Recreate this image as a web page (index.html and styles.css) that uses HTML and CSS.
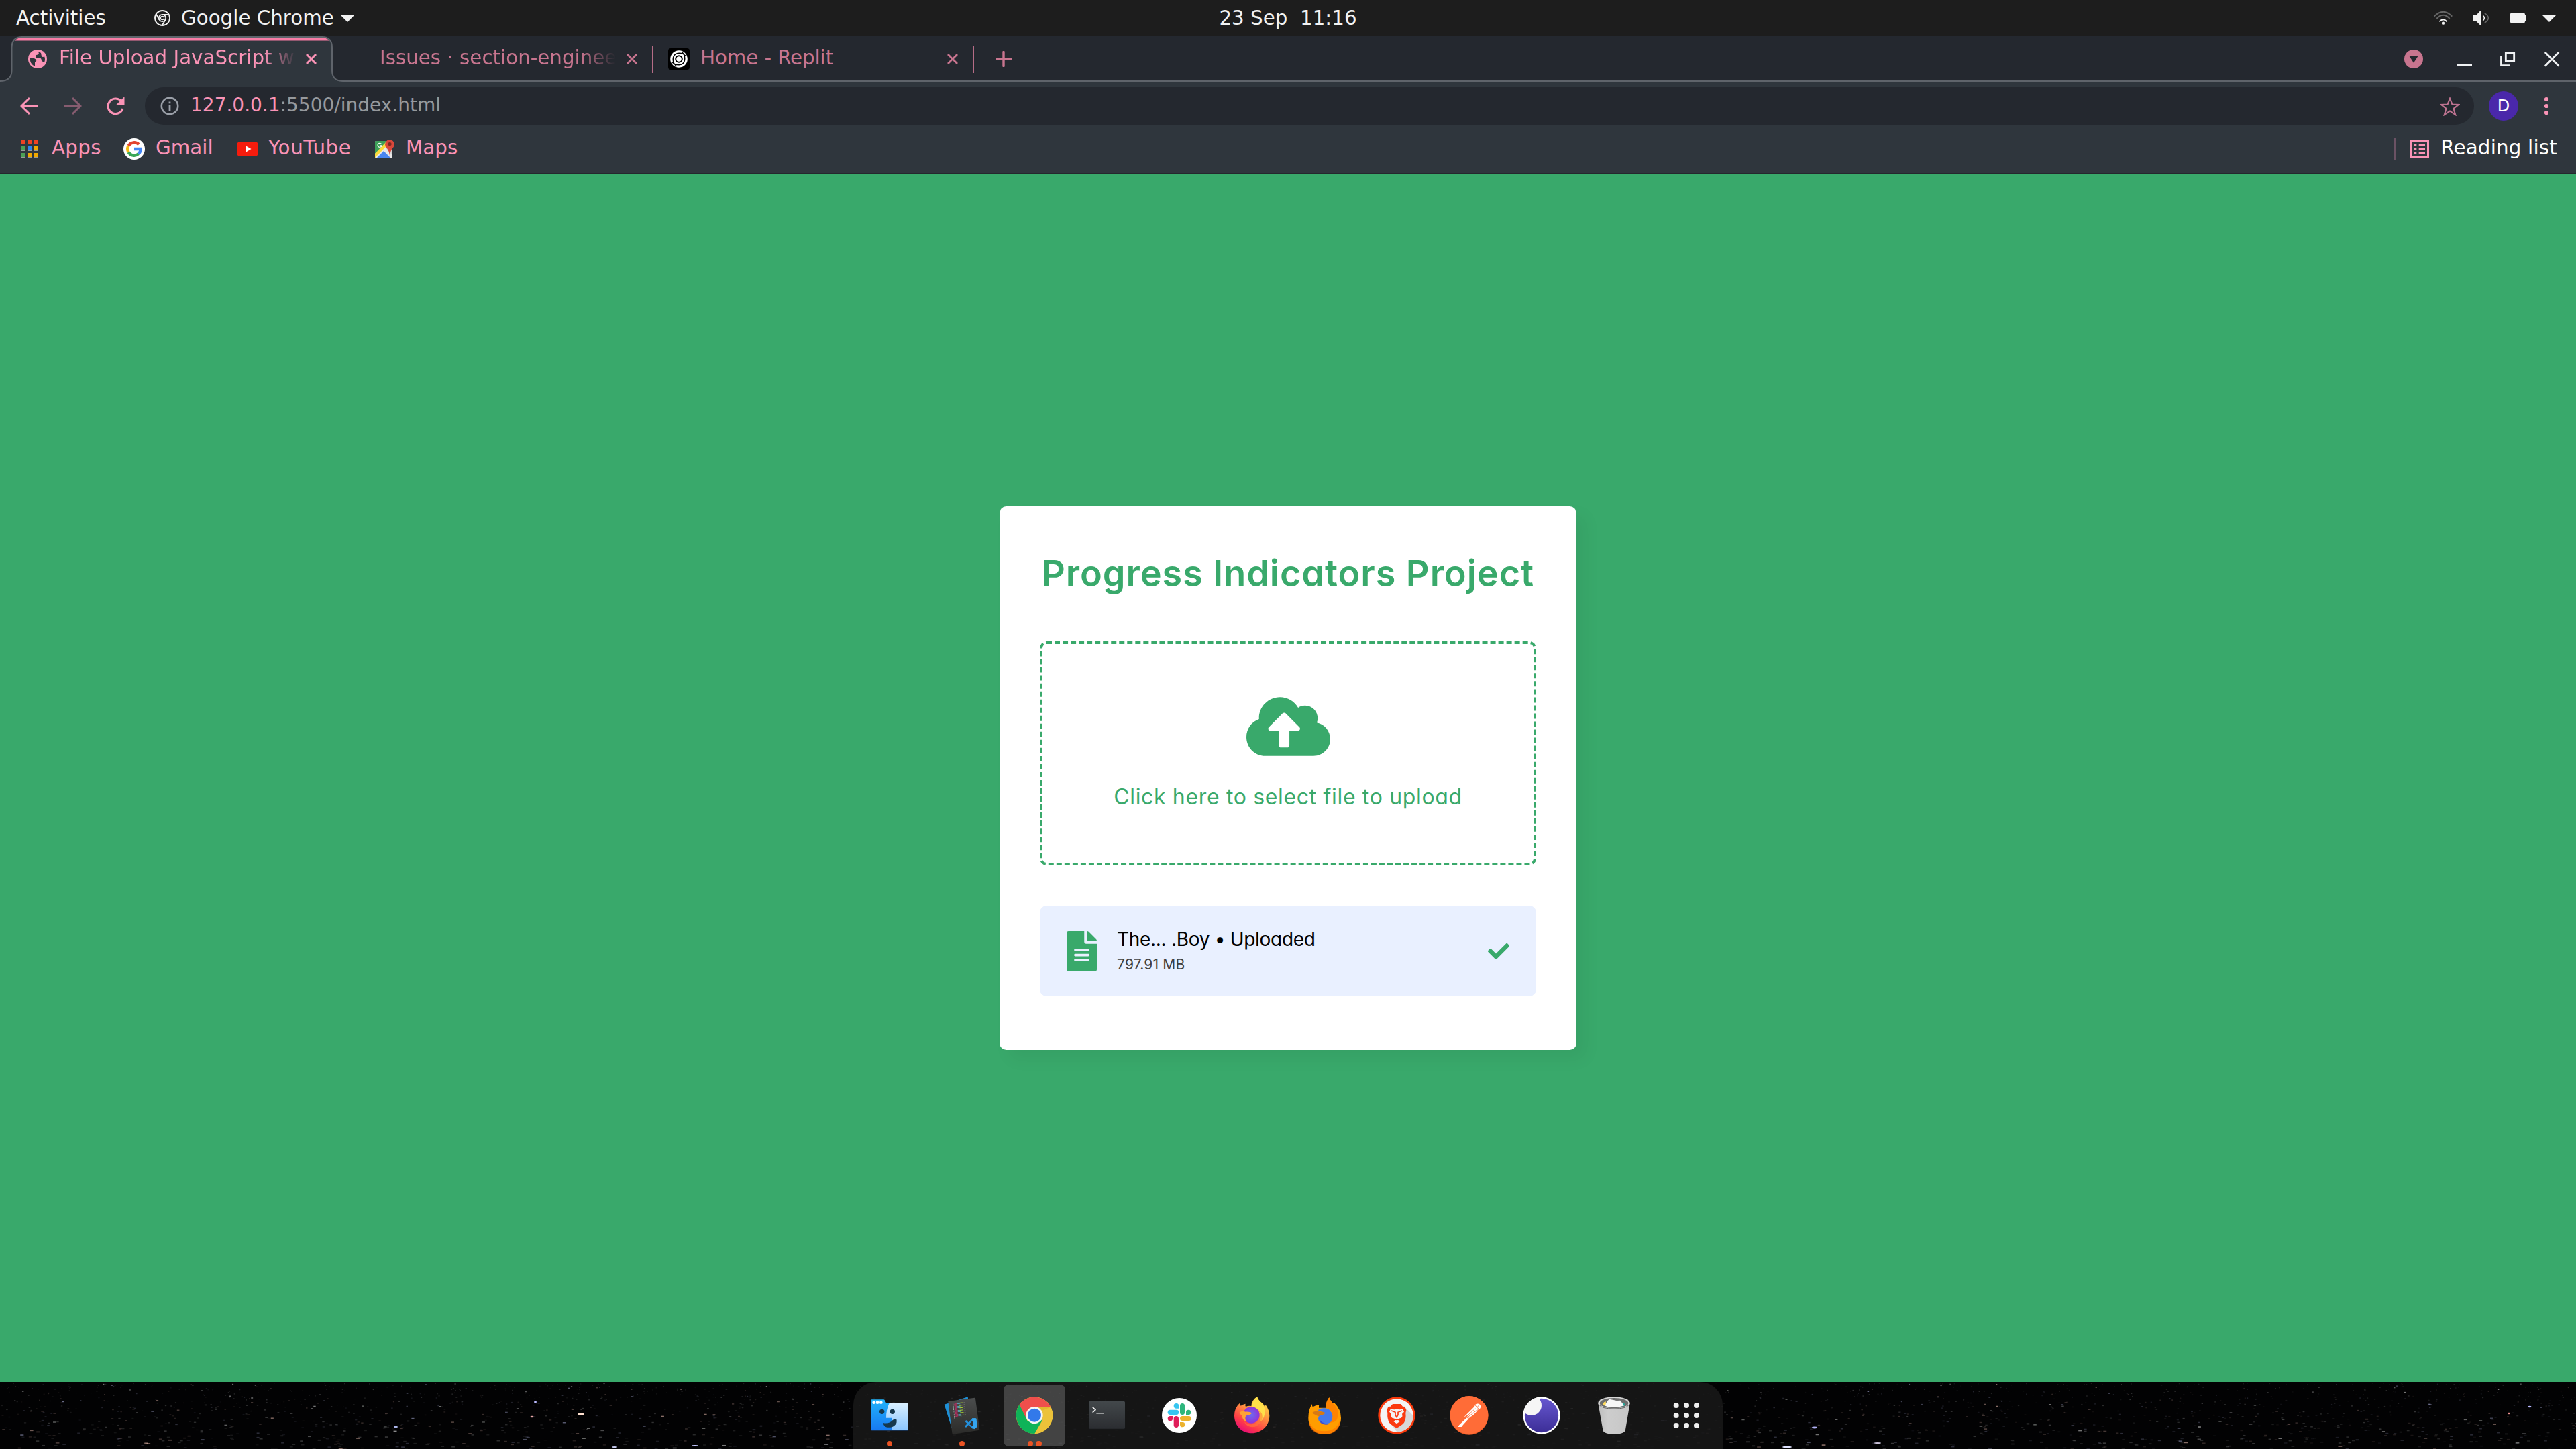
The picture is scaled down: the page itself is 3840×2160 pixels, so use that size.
FILE: index.html
```html
<!DOCTYPE html>
<html lang="en">
<head>
<meta charset="utf-8">
<title>File Upload JavaScript with Progress</title>
<link rel="stylesheet" href="styles.css">
</head>
<body>
<header class="topbar">
  <div class="topbar-left">
    <span class="activities">Activities</span>
    <svg class="app-icon" width="26" height="26" viewBox="0 0 26 26" fill="none" stroke="#f2f2f2" stroke-width="1.8"><circle cx="13" cy="13" r="11"/><circle cx="13" cy="13" r="5.2"/><circle cx="13" cy="13" r="2.6" stroke-width="1.2"/><path d="M13 7.8h9.6M8.5 15.6 3.8 7.2M17.5 15.6 12.7 24"/></svg>
    <span>Google Chrome</span>
    <svg class="caret" width="20" height="10" viewBox="0 0 20 10"><path d="M0 0h20L10 10z" fill="#f2f2f2"/></svg>
  </div>
  <div class="clock">23 Sep  11:16</div>
  <div class="topbar-right">
    <svg width="28" height="22" viewBox="684 48 84 66" fill="none" stroke-width="6"><path d="M686 74q40-42 80 0" stroke="#666"/><path d="M697 84q29-31 58 0" stroke="#666"/><path d="M709 97q17-19 34 0" stroke="#f2f2f2"/><circle cx="726" cy="104" r="6.5" fill="#f2f2f2"/></svg>
    <svg class="volume" width="26" height="22" viewBox="855 48 78 66" fill="none"><path d="M858 68h16l18-19h5v64h-5l-18-18h-16z" fill="#f2f2f2"/><path d="M904 70q12 11 0 23" stroke="#f2f2f2" stroke-width="5"/><path d="M911 59q34 22 0 44" stroke="#666" stroke-width="5"/></svg>
    <svg class="battery" width="24" height="14" viewBox="0 0 24 14"><path d="M1 0h20q1 0 1 2l2 1v8l-2 1q0 2-1 2H1q-1 0-1-1V1q0-1 1-1z" fill="#f2f2f2"/></svg>
    <svg class="power-caret" width="20" height="10" viewBox="0 0 20 10"><path d="M0 0h20L10 10z" fill="#f2f2f2"/></svg>
  </div>
</header>

<nav class="tabstrip">
  <div class="tab tab-active">
    <svg class="tab-shape" width="512" height="68" viewBox="0 0 512 68"><path d="M0 68V67Q17.500 67 17.500 51V17Q17.500 1 33 1H480Q495 1 495 17V51Q495 67 511 67V68z" fill="#2f363d"/><path d="M22 6.500Q26 2 33 2H480Q487 2 491 6.500z" fill="#f97da6"/><path d="M0 67Q17.500 67 17.500 51V17Q17.500 1 33 1H480Q495 1 495 17V51Q495 67 511 67" fill="none" stroke="#5f646b" stroke-width="2"/></svg>
    <svg class="favicon" width="28" height="28" viewBox="0 0 28 28"><circle cx="14" cy="14" r="14" fill="#fa93b6"/><path d="M3 13q6-1 9 2 1 2-2 4v6q-8-4-7-12zM14 3l2 2q-1 3-4 3l-1 4h6q3 1 3 5l4 2q2-5 0-9-2 2-4 0l-1-5q-2-2-5-2z" fill="#2f363d"/></svg>
    <span class="tab-title">File Upload JavaScript w</span>
    <svg class="tab-close" width="16" height="16" viewBox="0 0 16 16"><path d="m1 1 14 14M15 1 1 15" stroke="#fa93b6" stroke-width="3"/></svg>
  </div>
  <div class="tab tab-issues">
    <span class="tab-title">Issues · section-enginee</span>
    <svg class="tab-close" width="16" height="16" viewBox="0 0 16 16"><path d="m1 1 14 14M15 1 1 15" stroke="#c8758f" stroke-width="2.800"/></svg>
  </div>
  <div class="tab tab-replit">
    <svg class="favicon" width="32" height="32" viewBox="0 0 32 32"><rect width="32" height="32" rx="4"/><circle cx="16" cy="16" r="12.800" fill="#fff"/><g fill="none" stroke="#000" stroke-width="1.400"><circle cx="16" cy="16" r="4.800" stroke-width="2"/><path d="M18 7.500Q9 6.500 7.500 14t5 13M14 24.500q9 1 10.500-6.500T20 5M7.500 18Q7 9 14 7.500T27 12M24.500 14q.5 9-6.500 10.500T5 20"/></g></svg>
    <span class="tab-title">Home - Replit</span>
    <svg class="tab-close" width="16" height="16" viewBox="0 0 16 16"><path d="m1 1 14 14M15 1 1 15" stroke="#c8758f" stroke-width="2.800"/></svg>
  </div>
  <svg class="new-tab" width="24" height="24" viewBox="0 0 24 24"><path d="M12 1.500v21M1.500 12h21" stroke="#c8758f" stroke-width="3.400" stroke-linecap="round"/></svg>
  <svg class="window-controls" width="240" height="32" viewBox="552 216 720 96"><circle cx="594" cy="264" r="42" fill="#c8758f"/><path d="M575 252h38l-19 29z" fill="#24282f"/><path d="M789 288h66v9h-66z" fill="#f0f2f4"/><path d="M1006 235.500h37v36h-37z M985.500 252v41H1026" fill="none" stroke="#f0f2f4" stroke-width="8.500"/><path d="m1184 236 57 57m0-57-57 57" stroke="#f0f2f4" stroke-width="8.500" stroke-linecap="round"/></svg>
</nav>

<div class="toolbar">
  <div class="nav-buttons">
    <svg width="28" height="28" viewBox="0 0 28 28" fill="none" stroke="#fa93b6" stroke-width="3"><path d="M27 14H3M14 2 2 14l12 12"/></svg>
    <svg width="28" height="28" viewBox="0 0 28 28" fill="none" stroke="#865c70" stroke-width="3"><path d="M1 14h24M14 2l12 12-12 12"/></svg>
    <svg width="28" height="28" viewBox="0 0 28 28"><path d="M22.500 6.500A11.300 11.300 0 1 0 25 18" fill="none" stroke="#fa93b6" stroke-width="3.200"/><path d="M27.500 0v12h-12z" fill="#fa93b6"/></svg>
  </div>
  <div class="omnibox">
    <svg width="28" height="28" viewBox="0 0 28 28"><circle cx="14" cy="14" r="12.200" fill="none" stroke="#9a9fa8" stroke-width="2.600"/><path d="M12.600 12.500h2.800V21h-2.800zM12.600 7.500h2.800v2.800h-2.800z" fill="#9a9fa8"/></svg>
    <span class="url"><b>127.0.0.1</b>:5500/index.html</span>
    <svg class="star" width="30" height="30" viewBox="711 429 90 90"><path d="m756 440 10.500 27 28 1-22 18 8 27-24.500-16-24.500 16 8-27-22-18 28-1z" fill="none" stroke="#bd7390" stroke-width="6.500"/></svg>
  </div>
  <div class="avatar">D</div>
  <svg class="kebab" width="8" height="28" viewBox="0 0 8 28" fill="#fa93b6"><circle cx="4" cy="4" r="3.100"/><circle cx="4" cy="14" r="3.100"/><circle cx="4" cy="24" r="3.100"/></svg>
</div>

<div class="bookmarks">
  <svg class="bm-apps-icon" width="28" height="28" viewBox="0 0 28 28"><path d="M1 6h6v1H1zm10 0h6v1h-6zm10 0h6v1h-6zM1 16h6v1H1zm10 0h6v1h-6zm10 0h6v1h-6zM1 26h6v1H1zm10 0h6v1h-6zm10 0h6v1h-6z" fill="#999"/><path d="M1 0h6v6H1zm10 0h6v6h-6zm10 0h6v6h-6z" fill="#ee4223"/><path d="M1 10h6v6H1zm0 10h6v6H1z" fill="#4c9f55"/><path d="M11 10h6v6h-6z" fill="#2e86f0"/><path d="M21 10h6v6h-6zM11 20h6v6h-6zm10 0h6v6h-6z" fill="#f0a800"/></svg>
  <span class="bm bm-apps">Apps</span>
  <svg class="bm-gmail-icon" width="32" height="32" viewBox="0 0 32 32"><circle cx="16" cy="16" r="16" fill="#fff"/><g fill="none" stroke-width="4.400"><path d="M23 9.300A9.700 9.700 0 0 0 7.600 11.200" stroke="#e2432f"/><path d="M7.600 11.200a9.700 9.700 0 0 0 0 9.600" stroke="#f5b912"/><path d="M7.600 20.800a9.700 9.700 0 0 0 14.900 2.400" stroke="#3aa757"/><path d="M22.500 23.200A9.700 9.700 0 0 0 25.700 16H16" stroke="#4285f4"/></g></svg>
  <span class="bm bm-gmail">Gmail</span>
  <svg class="bm-yt-icon" width="32" height="24" viewBox="0 0 32 24"><rect y="1" width="32" height="22" rx="5" fill="#f61c0d"/><path d="m13 7 8.500 5-8.500 5z" fill="#fff"/></svg>
  <span class="bm bm-youtube">YouTube</span>
  <svg class="bm-maps-icon" width="30" height="30" viewBox="0 0 30 30"><rect y="3" width="26" height="26" rx="2" fill="#e8e8e8"/><path d="M0 22V5q0-2 2-2h17v4z" fill="#3d9f58"/><path d="M2 29 13 18l11 11z" fill="#4a86f0"/><path d="M0 22v6L20 8l-3-4z" fill="#fddb3a"/><path d="M16 14l10 10V11z" fill="#d3d3d3"/><path d="M22 25q-1-8-5-12a7 7 0 1 1 10 0q-4 4-5 12z" fill="#d9483b"/><circle cx="22" cy="7.500" r="2.600" fill="#7b2a22"/><path d="M9.500 7.500A3 3 0 1 0 10 10H7" fill="none" stroke="#fff" stroke-width="1.300"/></svg>
  <span class="bm bm-maps">Maps</span>
  <div class="reading">
    <svg width="28" height="28" viewBox="576 624 84 84" fill="#fa93b6"><path d="M576 624h84v84h-84zm9 9v66h66v-66z" fill-rule="evenodd"/><path d="M594 642h10v9h-10zm20 0h28v9h-28zm-20 19h10v9h-10zm20 0h28v9h-28zm-20 19h10v9h-10zm20 0h28v9h-28z"/></svg>
    <span class="bm">Reading list</span>
  </div>
</div>

<main class="page">
  <section class="card">
    <h1 class="card-title">Progress Indicators Project</h1>
    <form class="dropzone">
      <svg width="125" height="100" viewBox="0 0 640 512"><path fill="#39a96b" d="M537.600 226.600c4.100-10.700 6.400-22.400 6.400-34.600 0-53-43-96-96-96-19.700 0-38.100 6-53.300 16.200C367 64.200 315.300 32 256 32c-88.400 0-160 71.600-160 160 0 2.700.1 5.400.2 8.100C40.200 219.800 0 273.200 0 336c0 79.500 64.500 144 144 144h368c70.700 0 128-57.300 128-128 0-61.900-44-113.600-102.400-125.400zM393.400 288H328v112c0 8.800-7.200 16-16 16h-48c-8.800 0-16-7.200-16-16V288h-65.400c-14.300 0-21.400-17.200-11.300-27.400l105.400-105.400c6.200-6.200 16.400-6.200 22.600 0l105.400 105.400c10.100 10.100 2.900 27.400-11.300 27.400z"/></svg>
      <p class="dropzone-text">Click here to select file to upload</p>
    </form>
    <div class="file-row">
      <svg width="45" height="60" viewBox="0 0 384 512"><path fill="#39a96b" d="M224 136V0H24C10.700 0 0 10.700 0 24v464c0 13.300 10.700 24 24 24h336c13.300 0 24-10.700 24-24V160H248c-13.200 0-24-10.800-24-24zm64 236c0 6.600-5.400 12-12 12H108c-6.600 0-12-5.400-12-12v-8c0-6.600 5.400-12 12-12h168c6.600 0 12 5.400 12 12v8zm0-64c0 6.600-5.400 12-12 12H108c-6.600 0-12-5.400-12-12v-8c0-6.600 5.400-12 12-12h168c6.600 0 12 5.400 12 12v8zm0-72v8c0 6.600-5.400 12-12 12H108c-6.600 0-12-5.400-12-12v-8c0-6.600 5.400-12 12-12h168c6.600 0 12 5.400 12 12zm96-114.100v6.100H256V0h6.100c6.400 0 12.500 2.500 17 7l97.900 98c4.500 4.500 7 10.600 7 16.900z"/></svg>
      <div class="file-details">
        <span class="file-name">The... .Boy • Uploaded</span>
        <span class="file-size">797.91 MB</span>
      </div>
      <svg class="check" width="32" height="32" viewBox="0 0 512 512"><path fill="#39a96b" d="M173.898 439.404l-166.400-166.400c-9.997-9.997-9.997-26.206 0-36.204l36.203-36.204c9.997-9.998 26.207-9.998 36.204 0L192 312.690 432.095 72.596c9.997-9.997 26.207-9.997 36.204 0l36.203 36.204c9.997 9.997 9.997 26.206 0 36.204l-294.400 294.401c-9.998 9.997-26.207 9.997-36.204-.001z"/></svg>
    </div>
  </section>
</main>

<footer class="desktop">
  <canvas class="stars" width="3840" height="100"></canvas>
  <div class="dock">
    <div class="slot">
      <svg width="56" height="56" viewBox="84 96 168 168"><defs><linearGradient id="fl" x2="0" y2="1"><stop stop-color="#22b4fb"/><stop offset="1" stop-color="#1779f2"/></linearGradient><linearGradient id="fr" x2="0" y2="1"><stop stop-color="#d9f0ff"/><stop offset="1" stop-color="#8cc6ff"/></linearGradient></defs><path d="M85 113q0-4 4-4h52q4 0 6 4l6 11h94q5 0 5 5v114q0 4-4 4H89q-4 0-4-4z" fill="url(#fl)"/><path d="M167 125h80q4 0 4 4v112q0 4-4 4h-67q-3-12-3-25v-29h-24q0-38 14-66z" fill="url(#fr)"/><g fill="#fff"><circle cx="98" cy="122" r="7"/><circle cx="114" cy="122" r="7"/><circle cx="130" cy="122" r="7"/></g><g fill="#16384d"><circle cx="134" cy="163" r="11"/><circle cx="181" cy="163" r="11"/><path d="M140 213q25 6 42-12 6-6 17-3 5 15-8 26-14 12-34 9-17-4-17-20z"/></g></svg>
      <span class="dots"><i></i></span>
    </div>
    <div class="slot">
      <svg width="56" height="56" viewBox="408 96 168 168"><defs><linearGradient id="vs" x2="0" y2="1"><stop stop-color="#4b4d4d"/><stop offset="1" stop-color="#2b2b29"/></linearGradient></defs><path d="m413 131 105-34 14 100-86 40z" fill="#1e8fd5"/><path d="m430 117 119-16q3 0 3 3l19 141-118 18q-4 0-5-4z" fill="url(#vs)"/><g fill="none" stroke-width="3" transform="rotate(-6 480 155)"><path d="M455 126v68" stroke="#ddd" stroke-dasharray="2 3"/><path d="M466 126v60" stroke="#e5266f" stroke-width="12" stroke-dasharray="3 3"/><path d="M480 126v64" stroke="#58b9d0" stroke-width="14" stroke-dasharray="2 4"/><path d="M490 123v66" stroke="#a4cf35" stroke-width="16" stroke-dasharray="3 8"/><path d="M503 125v62" stroke="#ddd" stroke-width="8" stroke-dasharray="2 7"/></g><path d="m508 204 34 32M507 231l35-36" stroke="#2390dc" stroke-width="8"/><path d="m538 193 14-1q5 0 5 5l3 34-13 10-9-5z" fill="#35a5ef"/><path d="m539 204-14 15 17 10z" fill="#333"/></svg>
      <span class="dots"><i></i></span>
    </div>
    <div class="slot slot-active">
      <svg width="56" height="56" viewBox="732 96 168 168"><circle cx="816" cy="179" r="82" fill="#fdd835"/><path d="M898 179a82 82 0 0 1-82 82l36-64 0-54h37q9 17 9 36z" fill="#ecc23a"/><path d="M748 133a82 82 0 0 1 141 10h-73l-38 56z" fill="#ef4f4c"/><path d="M749 132a82 82 0 0 0 68 129l36-62-68 6z" fill="#0fb358"/><path d="M817 143h72l-40 16z" fill="#e3b72f"/><circle cx="816" cy="179" r="38" fill="#f5f5f5"/><circle cx="816" cy="179" r="30" fill="#3279ea"/></svg>
      <span class="dots"><i></i><i></i></span>
    </div>
    <div class="slot">
      <svg width="56" height="56" viewBox="1056 96 168 168"><defs><linearGradient id="tm" x2="0" y2="1"><stop stop-color="#43484b"/><stop offset="1" stop-color="#2b2d31"/></linearGradient></defs><rect x="1058" y="117" width="164" height="125" rx="5" fill="#17181a"/><rect x="1059" y="117" width="162" height="122" rx="5" fill="url(#tm)"/><path d="m1076 143 13 12-13 12M1093 170h32" fill="none" stroke="#f5f5f5" stroke-width="4.500"/></svg>
    </div>
    <div class="slot">
      <svg width="56" height="56" viewBox="90 96 168 168"><circle cx="174" cy="180" r="78" fill="#fff"/><g fill="#36c5f0"><path d="M160 149a11.500 11.500 0 1 1 12-11.500V149z"/><rect x="122" y="155" width="50" height="22" rx="11"/></g><g fill="#2eb67d"><rect x="177" y="126" width="21" height="51" rx="10.500"/><path d="M204 167a11 11 0 1 1 11 10h-11z"/></g><g fill="#ecb22e"><rect x="177" y="183" width="50" height="21" rx="10.500"/><path d="M177 210h10a11 11 0 1 1-10 11z"/></g><g fill="#e01e5a"><path d="M144 183v10a11 11 0 1 1-11-10z"/><rect x="149" y="183" width="22" height="51" rx="11"/></g></svg>
    </div>
    <div class="slot">
      <svg width="56" height="56" viewBox="414 96 168 168"><defs><linearGradient id="ff" x1=".8" y1="0" x2=".25" y2="1"><stop stop-color="#fff04a"/><stop offset=".4" stop-color="#ff9640"/><stop offset=".75" stop-color="#ff3b47"/><stop offset="1" stop-color="#e2067d"/></linearGradient><radialGradient id="fg"><stop stop-color="#6b6bf0"/><stop offset="1" stop-color="#9333d6"/></radialGradient></defs><path d="M447 122q-3 10 2 15 6-6 21-9-3 8 1 13 12-5 25-3 0-25 26-42 6 17 21 28 11 8 13 18l4-9q16 22 17 48c0 46-36 78-79 78s-78-31-78-78q0-36 27-59z" fill="url(#ff)"/><path d="M498 141q2-26 24-44 4 16 20 28 20 20 13 51-4 22-20 32 2-28-5-45-10-18-32-22z" fill="#ffe04a"/><circle cx="496" cy="178" r="37" fill="url(#fg)"/><path d="M443 166q12-9 28-2 18-1 27 5-3 10-25 12-8 10 0 26-18-8-18-25-10-6-12-16z" fill="#ffa236"/><path d="M464 206q10 14 34 14 30-3 36-33 2-20-8-34 28 18 16 50-18 32-48 28-22-4-30-25z" fill="#ff7a37" opacity=".6"/></svg>
    </div>
    <div class="slot">
      <svg width="56" height="56" viewBox="738 96 168 168"><path d="M768 129q-1 9 3 13 9-6 28-10-2 8-1 14h33q-2-29 13-46 7 18 18 26l4-4q31 30 31 69c0 41-31 73-73 73s-73-31-73-73q0-39 17-62z" fill="#ff9d00"/><path d="M831 146q-3-30 13-46 7 18 17 26 38 35 14 79-18 10-33 8 26-17 14-40 3-15-25-27z" fill="#ff8300"/><path d="M793 157q23-18 50-4l14 17q8 28-12 44-27 11-46-8-8-14 0-24l27-12z" fill="#4479ec"/><path d="M798 190q8 29 47 28-23 8-39-5z" fill="#414dc9"/><path d="M770 166q13-8 29-3 18-1 27 5-3 9-23 12-4 7-11 2l-10-5q-11-3-12-11z" fill="#d87913"/><path d="M752 195q12 55 70 55 57 0 73-55-1 69-73 69-70 0-70-69z" fill="#ff6f00" opacity=".6"/></svg>
    </div>
    <div class="slot">
      <svg width="56" height="56" viewBox="1062 96 168 168"><circle cx="1146" cy="180" r="83" fill="#fa3a0c"/><circle cx="1146" cy="180" r="74" fill="#f4f4f4"/><path d="m1184 145 36 36a74 74 0 0 1-72 73l-22-28 40-10z" fill="#d7d7d7"/><path d="M1128 129h36l9 11 10 1 6 16-3 12q3 27-7 43-8 11-33 24-25-13-33-24-10-16-8-43l-3-12 6-16 10-1z" fill="#fb3a10"/><path d="M1118 152l18 2 10-4 10 4 18-2 5 12-9 9q4 13-4 18l-18 6 12 10-14 10-14-10 12-10-18-6q-8-5-4-18l-9-9z" fill="#f4f4f4"/><path d="M1122 159l18 7v12l6 10 6-10v-12l18-7M1126 196l20 3 20-3" fill="none" stroke="#fb3a10" stroke-width="5"/></svg>
    </div>
    <div class="slot">
      <svg width="58" height="58" viewBox="93 93 174 174"><circle cx="180" cy="180" r="86" fill="#e85a25"/><circle cx="180" cy="178" r="85" fill="#ff6c37"/><circle cx="218" cy="141" r="13.500" fill="#fff"/><path d="M208 135q7 13 14 14M218 141l8-9" stroke="#ff6c37" stroke-width="2.500" fill="none"/><path d="m207 137 11 20q-16 22-33 30l-32 35-7 9h-17l8-10 34-32 3-11-18 10z" fill="#fff"/><path d="m208 149-40 36M213 158l-38 29M170 190l10 3" stroke="#ff6c37" stroke-width="2.500"/></svg>
    </div>
    <div class="slot">
      <svg width="56" height="56" viewBox="420 96 168 168"><defs><linearGradient id="ins" x2="0" y2="1"><stop stop-color="#6657cf"/><stop offset="1" stop-color="#3c2e97"/></linearGradient><clipPath id="insc"><circle cx="504" cy="180" r="82"/></clipPath></defs><circle cx="504" cy="180" r="83" fill="#fff"/><circle cx="504" cy="180" r="75.500" fill="url(#ins)"/><circle cx="459" cy="135" r="45" fill="#f6f6f6" clip-path="url(#insc)"/></svg>
    </div>
    <div class="slot">
      <svg width="56" height="56" viewBox="744 96 168 168"><defs><linearGradient id="tr"><stop stop-color="#bdbdbd"/><stop offset=".3" stop-color="#cdcdcd"/><stop offset="1" stop-color="#c6c6c6"/></linearGradient></defs><path d="M757 126h142l-20 118q-2 19-51 19t-50-19z" fill="url(#tr)"/><ellipse cx="828" cy="124" rx="71" ry="27" fill="#d6d6d6"/><ellipse cx="828" cy="125" rx="64" ry="23" fill="#6d6d6d"/><path d="M778 134q-3-10 12-18l6 22z" fill="#ffdb5c"/><path d="m866 122 12 7-3 7-10 4z" fill="#22a69a"/><path d="M789 137q2-17 18-30l33 7 16-1 17 23q-20 8-45 8t-39-7z" fill="#f7f7f7"/><path d="M762 133q10 17 66 17t66-17" fill="none" stroke="#5e5e5e" stroke-width="3"/></svg>
    </div>
    <div class="slot">
      <svg width="56" height="56" viewBox="1068 96 168 168" fill="#f0f0f0"><circle cx="1106" cy="135" r="12"/><circle cx="1152" cy="135" r="12"/><circle cx="1197" cy="135" r="12"/><circle cx="1106" cy="180" r="12"/><circle cx="1152" cy="180" r="12"/><circle cx="1197" cy="180" r="12"/><circle cx="1106" cy="225" r="12"/><circle cx="1152" cy="225" r="12"/><circle cx="1197" cy="225" r="12"/></svg>
    </div>
  </div>
</footer>
<script src="script.js"></script>
</body>
</html>
```
FILE: styles.css
```css
* { box-sizing: border-box; }
body {
  margin: 0;
  width: 3840px;
  height: 2160px;
  display: flex;
  flex-direction: column;
  overflow: hidden;
  background: #020203;
  font-family: "DejaVu Sans", sans-serif;
  font-size: 29.33px;
  line-height: 36px;
}
svg { display: block; flex: none; }

/* Desktop panel */
.topbar {
  height: 54px;
  flex: none;
  display: grid;
  grid-template-columns: 1fr auto 1fr;
  align-items: center;
  background: #1d1d1d;
  color: #f2f2f2;
}
.topbar-left { display: flex; align-items: center; padding-left: 24px; }
.activities { width: 205px; }
.app-icon { margin-right: 15px; }
.caret { margin: 2px 0 0 10px; }
.clock { white-space: pre; }
.topbar-right { display: flex; align-items: center; justify-content: flex-end; padding-right: 30px; }
.volume { margin-left: 29px; }
.battery { margin-left: 31px; }
.power-caret { margin: 2px 0 0 24px; }

/* Browser tabs */
.tabstrip {
  height: 68px;
  flex: none;
  display: flex;
  align-items: center;
  background: #24282f;
  border-bottom: 2px solid #5f646b;
}
.tab { display: flex; align-items: center; height: 66px; position: relative; }
.tab-title {
  flex: 1;
  white-space: nowrap;
  padding-bottom: 2px;
  color: #c8758f;
}
.tab-close { position: relative; top: 1px; }
.tab > .favicon { position: relative; top: 1px; margin-right: 16px; }
.tab-active { width: 495px; padding: 0 23px 0 42px; }
.tab-active > .favicon { margin-right: 18px; }
.tab-active .tab-title {
  position: relative;
  color: #fa93b6;
  margin-right: 14px;
  -webkit-mask-image: linear-gradient(90deg, #000 305px, transparent 354px);
  mask-image: linear-gradient(90deg, #000 305px, transparent 354px);
}
.tab-shape { position: absolute; left: 0; top: 0; }
.tab-issues { width: 479px; padding: 0 24px 0 71px; }
.tab-issues .tab-title {
  -webkit-mask-image: linear-gradient(90deg, #000 300px, transparent 352px);
  mask-image: linear-gradient(90deg, #000 300px, transparent 352px);
}
.tab-replit { width: 478px; padding: 0 24px 0 22px; }
.tab-replit .tab-title { letter-spacing: -0.1px; }
.tab-issues::after, .tab-replit::after {
  content: "";
  position: absolute;
  right: 0;
  top: 15px;
  width: 2px;
  height: 40px;
  background: #b56c86;
}
.new-tab { margin: 2px 0 0 32px; }
.window-controls { margin: 2px 16px 0 auto; }

/* Address bar */
.toolbar {
  height: 72px;
  flex: none;
  display: flex;
  align-items: center;
  background: #2f363d;
  padding: 0 40px 0 30px;
}
.nav-buttons { display: flex; gap: 36px; width: 186px; }
.omnibox {
  height: 56px;
  width: 3472px;
  display: flex;
  align-items: center;
  padding: 0 21px 0 23px;
  border-radius: 28px;
  background: #24282f;
}
.url { margin-left: 17px; padding-bottom: 3px; font-size: 28px; color: #96999d; }
.url b { font-weight: 400; color: #fa93b6; }
.star { margin-left: auto; }
.avatar {
  width: 44px;
  height: 44px;
  margin-left: 22px;
  border-radius: 50%;
  background: #4a28aa;
  color: #fff;
  text-align: center;
  font-size: 24px;
  line-height: 44px;
}
.kebab { margin-left: 38px; }

/* Bookmarks bar */
.bookmarks {
  height: 66px;
  flex: none;
  display: flex;
  align-items: center;
  padding: 0 28px 9px 30px;
  background: #2f363d;
  border-bottom: 2px solid #24282d;
}
.bm { color: #fa93b6; padding-bottom: 3px; }
.bm-apps { width: 107px; margin-left: 19px; letter-spacing: 0.3px; }
.bm-gmail { width: 121px; margin-left: 16px; }
.bm-youtube { width: 160px; margin-left: 15px; letter-spacing: 0.6px; }
.bm-maps { margin-left: 16px; }
.bm-maps-icon { margin-left: -1px; }
.reading {
  display: flex;
  align-items: center;
  gap: 17px;
  height: 32px;
  margin-left: auto;
  padding-left: 22px;
  border-left: 2px solid #6b5264;
}
.reading .bm { color: #fff; letter-spacing: 0.2px; }

/* Upload page */
.page { height: 1800px; flex: none; padding: 495px 1490px 0; background: #39a96b; }
.card {
  width: 860px;
  height: 810px;
  padding: 60px;
  border-radius: 10px;
  background: #fff;
  box-shadow: 14px 14px 24px rgba(0, 0, 0, 0.05);
  font-family: Inter, "Open Sans", sans-serif;
  font-feature-settings: "cv11";
}
.card-title {
  margin: 0 0 60px;
  height: 81px;
  font-size: 54px;
  font-weight: 600;
  line-height: 80px;
  letter-spacing: 0.95px;
  text-align: center;
  white-space: nowrap;
  color: #39a96b;
}
.dropzone {
  height: 334px;
  display: flex;
  flex-direction: column;
  align-items: center;
  padding-top: 73px;
  border: 4px dashed #39a96b;
  border-radius: 10px;
}
.dropzone-text {
  margin: 31px 0 0;
  font-size: 32px;
  line-height: 48px;
  letter-spacing: 0.66px;
  white-space: nowrap;
  color: #39a96b;
}
.file-row {
  height: 135px;
  display: flex;
  align-items: center;
  margin-top: 60px;
  padding: 0 40px;
  border-radius: 10px;
  background: #e9f0ff;
}
.file-details { display: flex; flex-direction: column; margin-left: 30px; padding-top: 3px; }
.file-name { font-size: 28px; line-height: 37px; letter-spacing: -0.3px; color: #000; }
.file-size { font-size: 21px; line-height: 38px; letter-spacing: 0.2px; color: #404040; }
.check { margin-left: auto; }

/* Desktop and dock */
.desktop { height: 100px; flex: none; position: relative; display: flex; justify-content: center; background: #020203; }
.stars { position: absolute; left: 0; top: 0; }
.dock {
  position: relative;
  width: 1296px;
  height: 100px;
  display: flex;
  gap: 16px;
  padding: 4px 8px;
  border-radius: 34px 34px 0 0;
  background: rgba(24, 24, 24, 0.86);
}
.slot {
  position: relative;
  width: 92px;
  height: 92px;
  display: flex;
  align-items: center;
  justify-content: center;
  border-radius: 8px;
}
.slot-active { background: rgba(255, 255, 255, 0.2); }
.dots { position: absolute; left: 0; right: 0; bottom: 0; display: flex; justify-content: center; gap: 4px; }
.dots i { width: 8.500px; height: 8.500px; border-radius: 50%; background: #eb5424; }
```
FILE: script.js
```js
// Night-sky wallpaper: seeded scatter of faint stars plus a few bright ones.
const ctx = document.querySelector('.stars').getContext('2d');
let seed = 7;
const rnd = () => (seed = (seed * 16807) % 2147483647) / 2147483647;
const tints = ['255,255,255', '255,205,190', '200,205,255', '220,225,220'];
for (let i = 0; i < 3000; i++) {
  const y = Math.pow(rnd(), 1.3) * 98 + 2;
  const near = y / 100;
  const bright = rnd() < 0.1;
  const alpha = bright ? 0.25 + rnd() * 0.3 : 0.05 + rnd() * 0.17;
  ctx.fillStyle = `rgba(${tints[Math.floor(rnd() * 4)]},${alpha})`;
  ctx.fillRect(rnd() * 3840, y, 1 + near * 4 + (bright ? 1 : 0), 1 + near * 0.7);
}
const brightStars = [
  [866, 48, 5, 1.6, '#ffe0cf'], [793, 52, 2.5, 1.2, '#e8a8a8'], [798, 30, 2, 1.3, '#b9b9ff'],
  [590, 67, 3, 1.2, '#aab4e8'], [916, 97, 4, 1, '#c5c9ee'], [1036, 95, 5, 1, '#c5c9ff'],
  [2664, 97, 7, 1.4, '#dfe2ff'], [2705, 68, 4, 1.4, '#b0b0f5'], [2799, 91, 5, 1, '#c8c0d8'],
  [3771, 37, 2.5, 1.2, '#b8b8ff'], [3740, 47, 2, 1.2, '#ef8f8f']
];
for (const [x, y, rx, ry, color] of brightStars) {
  ctx.fillStyle = color;
  ctx.beginPath();
  ctx.ellipse(x, y, rx, ry, 0, 0, 7);
  ctx.fill();
}
```
